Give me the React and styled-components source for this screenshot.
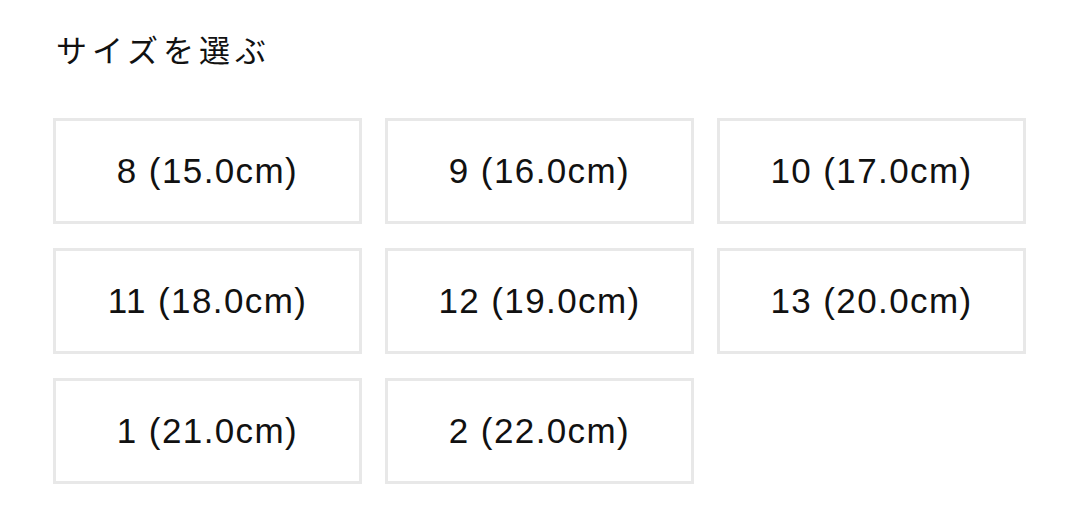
import React from "react";
import styled, { createGlobalStyle } from "styled-components";

const GlobalStyle = createGlobalStyle`
  body {
    margin: 0;
    background: #ffffff;
    font-family: "Liberation Sans", Arial, "Noto Sans CJK JP", sans-serif;
    color: #111111;
  }
`;

const Wrapper = styled.div`
  padding: 33px 54px 0 53px;
  width: 973px;
`;

const Title = styled.h2`
  margin: 0 0 54px 3px;
  font-family: "Noto Sans CJK JP", sans-serif;
  font-weight: 400;
  font-size: 31px;
  line-height: 31px;
  letter-spacing: 5px;
  color: #111111;
`;

const SizeGrid = styled.div`
  display: grid;
  grid-template-columns: repeat(3, 309px);
  column-gap: 23px;
  row-gap: 24px;
`;

const SizeButton = styled.button`
  box-sizing: border-box;
  height: 106px;
  border: 3px solid #e8e8e8;
  background: #ffffff;
  font-family: "Liberation Sans", Arial, sans-serif;
  font-size: 35px;
  letter-spacing: 1.4px;
  color: #111111;
  cursor: pointer;
  padding: 0;
  display: flex;
  align-items: center;
  justify-content: center;
`;

const sizes = [
  "8 (15.0cm)",
  "9 (16.0cm)",
  "10 (17.0cm)",
  "11 (18.0cm)",
  "12 (19.0cm)",
  "13 (20.0cm)",
  "1 (21.0cm)",
  "2 (22.0cm)",
];

export default function App() {
  return (
    <>
      <GlobalStyle />
      <Wrapper>
        <Title>サイズを選ぶ</Title>
        <SizeGrid>
          {sizes.map((s) => (
            <SizeButton key={s}>{s}</SizeButton>
          ))}
        </SizeGrid>
      </Wrapper>
    </>
  );
}
